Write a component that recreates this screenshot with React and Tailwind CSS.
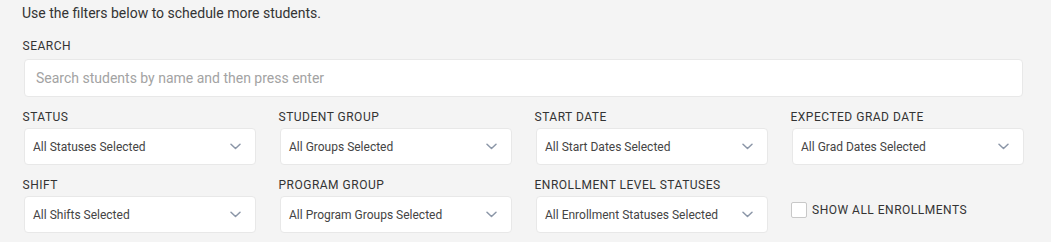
import React from "react";

function Chevron() {
  return (
    <svg width="11" height="7" viewBox="0 0 11 7" fill="none" className="shrink-0">
      <path d="M1 1.2 L5.5 5.5 L10 1.2" stroke="#8c97a8" strokeWidth="1.5" strokeLinecap="round" strokeLinejoin="round" />
    </svg>
  );
}

function Field({ label, value }) {
  return (
    <div className="flex flex-col">
      <div className="-ml-[1.5px] text-[12px] leading-[16px] tracking-[0.5px] text-[#333333] mb-[3px]">{label}</div>
      <div className="h-[37px] bg-white border border-[#e8e8e8] rounded-[4px] flex items-center justify-between pl-[8px] pr-[14px]">
        <span className="text-[12px] text-[#444444]">{value}</span>
        <Chevron />
      </div>
    </div>
  );
}

export default function App() {
  return (
    <div
      className="w-[1051px] h-[242px] bg-[#f4f4f4] overflow-hidden"
      style={{ fontFamily: "Roboto, 'Liberation Sans', sans-serif" }}
    >
      <div className="w-[1000px] ml-[24px]">
        <div className="pt-[3px] -ml-[2px] text-[14px] leading-[20px] text-[#333333]">
          Use the filters below to schedule more students.
        </div>
        <div className="mt-[15px] -ml-[1.5px] text-[12px] leading-[16px] tracking-[0.5px] text-[#333333]">SEARCH</div>
        <div className="mt-[5px] h-[38px] w-[999px] bg-white border border-[#e8e8e8] rounded-[4px] flex items-center pl-[11px]">
          <span className="text-[14px] text-[#a3a3a3]">Search students by name and then press enter</span>
        </div>
        <div className="grid grid-cols-4 gap-x-[24px] gap-y-[12px] mt-[12px]">
          <Field label="STATUS" value="All Statuses Selected" />
          <Field label="STUDENT GROUP" value="All Groups Selected" />
          <Field label="START DATE" value="All Start Dates Selected" />
          <Field label="EXPECTED GRAD DATE" value="All Grad Dates Selected" />
          <Field label="SHIFT" value="All Shifts Selected" />
          <Field label="PROGRAM GROUP" value="All Program Groups Selected" />
          <Field label="ENROLLMENT LEVEL STATUSES" value="All Enrollment Statuses Selected" />
          <div className="flex items-center h-[16px] mt-[25px] -ml-[1px]">
            <div className="w-[16px] h-[16px] bg-white border border-[#c8c8c8] rounded-[2px]" />
            <span className="ml-[5px] text-[12px] leading-[16px] tracking-[0.5px] text-[#333333]">SHOW ALL ENROLLMENTS</span>
          </div>
        </div>
      </div>
    </div>
  );
}
